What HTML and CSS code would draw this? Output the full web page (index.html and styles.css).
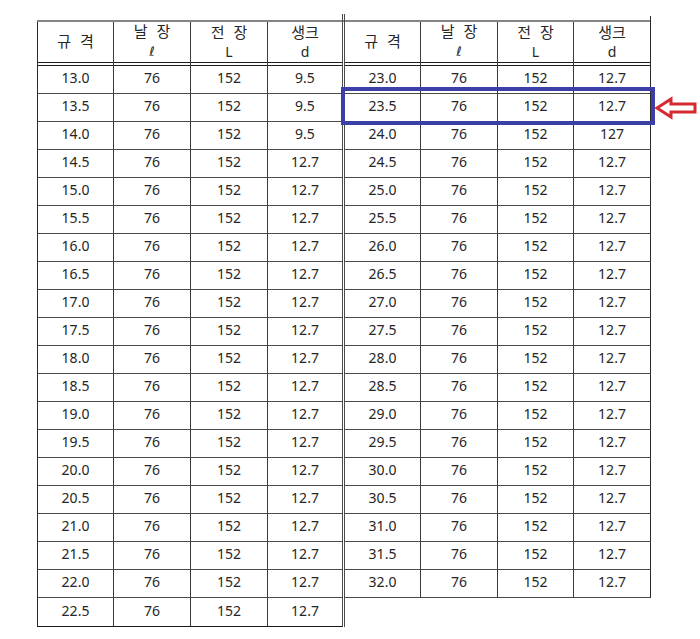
FILE: index.html
```html
<!DOCTYPE html>
<html lang="ko">
<head>
<meta charset="utf-8">
<title>규격표</title>
<link rel="stylesheet" href="styles.css">
</head>
<body>
<div class="sheet">
  <div class="half half-left">
    <table class="spec spec-left">
      <thead>
        <tr><th>규 격</th><th>날 장<br><span class="ell">ℓ</span></th><th>전 장<br><span class="sym">L</span></th><th>생크<br><span class="sym">d</span></th></tr>
      </thead>
      <tbody>
        <tr><td>13.0</td><td>76</td><td>152</td><td>9.5</td></tr>
        <tr><td>13.5</td><td>76</td><td>152</td><td>9.5</td></tr>
        <tr><td>14.0</td><td>76</td><td>152</td><td>9.5</td></tr>
        <tr><td>14.5</td><td>76</td><td>152</td><td>12.7</td></tr>
        <tr><td>15.0</td><td>76</td><td>152</td><td>12.7</td></tr>
        <tr><td>15.5</td><td>76</td><td>152</td><td>12.7</td></tr>
        <tr><td>16.0</td><td>76</td><td>152</td><td>12.7</td></tr>
        <tr><td>16.5</td><td>76</td><td>152</td><td>12.7</td></tr>
        <tr><td>17.0</td><td>76</td><td>152</td><td>12.7</td></tr>
        <tr><td>17.5</td><td>76</td><td>152</td><td>12.7</td></tr>
        <tr><td>18.0</td><td>76</td><td>152</td><td>12.7</td></tr>
        <tr><td>18.5</td><td>76</td><td>152</td><td>12.7</td></tr>
        <tr><td>19.0</td><td>76</td><td>152</td><td>12.7</td></tr>
        <tr><td>19.5</td><td>76</td><td>152</td><td>12.7</td></tr>
        <tr><td>20.0</td><td>76</td><td>152</td><td>12.7</td></tr>
        <tr><td>20.5</td><td>76</td><td>152</td><td>12.7</td></tr>
        <tr><td>21.0</td><td>76</td><td>152</td><td>12.7</td></tr>
        <tr><td>21.5</td><td>76</td><td>152</td><td>12.7</td></tr>
        <tr><td>22.0</td><td>76</td><td>152</td><td>12.7</td></tr>
        <tr class="last"><td>22.5</td><td>76</td><td>152</td><td>12.7</td></tr>
      </tbody>
    </table>
  </div>
  <div class="half half-right">
    <table class="spec spec-right">
      <thead>
        <tr><th>규 격</th><th>날 장<br><span class="ell">ℓ</span></th><th>전 장<br><span class="sym">L</span></th><th>생크<br><span class="sym">d</span></th></tr>
      </thead>
      <tbody>
        <tr><td>23.0</td><td>76</td><td>152</td><td>12.7</td></tr>
        <tr><td>23.5</td><td>76</td><td>152</td><td>12.7</td></tr>
        <tr><td>24.0</td><td>76</td><td>152</td><td>127</td></tr>
        <tr><td>24.5</td><td>76</td><td>152</td><td>12.7</td></tr>
        <tr><td>25.0</td><td>76</td><td>152</td><td>12.7</td></tr>
        <tr><td>25.5</td><td>76</td><td>152</td><td>12.7</td></tr>
        <tr><td>26.0</td><td>76</td><td>152</td><td>12.7</td></tr>
        <tr><td>26.5</td><td>76</td><td>152</td><td>12.7</td></tr>
        <tr><td>27.0</td><td>76</td><td>152</td><td>12.7</td></tr>
        <tr><td>27.5</td><td>76</td><td>152</td><td>12.7</td></tr>
        <tr><td>28.0</td><td>76</td><td>152</td><td>12.7</td></tr>
        <tr><td>28.5</td><td>76</td><td>152</td><td>12.7</td></tr>
        <tr><td>29.0</td><td>76</td><td>152</td><td>12.7</td></tr>
        <tr><td>29.5</td><td>76</td><td>152</td><td>12.7</td></tr>
        <tr><td>30.0</td><td>76</td><td>152</td><td>12.7</td></tr>
        <tr><td>30.5</td><td>76</td><td>152</td><td>12.7</td></tr>
        <tr><td>31.0</td><td>76</td><td>152</td><td>12.7</td></tr>
        <tr><td>31.5</td><td>76</td><td>152</td><td>12.7</td></tr>
        <tr><td>32.0</td><td>76</td><td>152</td><td>12.7</td></tr>
      </tbody>
    </table>
  </div>
</div>
<div class="highlight"></div>
<svg class="arrow" width="44" height="24" viewBox="0 0 44 24" aria-hidden="true">
  <polygon points="3,12 17,3 17,8 41,8 41,16 17,16 17,21" fill="#fff" stroke="#d42a30" stroke-width="3" stroke-linejoin="miter"/>
</svg>
</body>
</html>
```
FILE: styles.css
```css
html, body {
  margin: 0;
  padding: 0;
  background: #fff;
}

body {
  position: relative;
  width: 700px;
  height: 639px;
  overflow: hidden;
  font-family: "Noto Sans", "Noto Sans CJK KR", sans-serif;
  color: #262626;
}

.sheet {
  display: flex;
  align-items: stretch;
  margin: 20px 0 0 37px;
  width: 614px;
  border-top: 2px solid #858585;
}

.half {
  position: relative;
}

.half-left {
  width: 304px;
  border-left: 1px solid #2a2a2a;
  border-right: 1px solid #4a4a4a;
  border-bottom: 1px solid #1a1a1a;
  align-self: flex-start;
}

.half-right {
  width: 306px;
  margin-left: 1px;
  border-left: 1px solid #4a4a4a;
}

.half-left::before,
.half-right::before {
  content: "";
  position: absolute;
  top: -8px;
  height: 8px;
  width: 0;
}

.half-left::before {
  right: -1px;
  border-right: 1px solid #4a4a4a;
}

.half-right::before {
  left: -1px;
  border-left: 1px solid #4a4a4a;
}

.half-right::after {
  content: "";
  position: absolute;
  top: -6px;
  right: 0;
  height: 6px;
  width: 0;
  border-right: 1px solid #2a2a2a;
}

.spec {
  border-collapse: separate;
  border-spacing: 0;
  table-layout: fixed;
}

.spec-left { width: 304px; }
.spec-right { width: 306px; }

.spec th,
.spec td {
  padding: 0;
  box-sizing: border-box;
  text-align: center;
  font-size: 14px;
  font-weight: normal;
  border-right: 1px solid #3a3a3a;
}

.spec th {
  height: 44px;
  padding-bottom: 4px;
  font-size: 15px;
  line-height: 19px;
  word-spacing: 5px;
  vertical-align: middle;
  border-bottom: 1px solid #1e1e1e;
  box-shadow: inset 0 -2px 0 #fff, inset 0 -3px 0 #1e1e1e;
}

.spec th .sym {
  font-size: 14px;
}

.spec td {
  height: 28px;
  line-height: 20px;
  padding-bottom: 3px;
  vertical-align: middle;
  border-bottom: 1px solid #4a4a4a;
}

.spec-left th:nth-child(1), .spec-left td:nth-child(1) { width: 76px; }
.spec-left th:nth-child(2), .spec-left td:nth-child(2) { width: 77px; }
.spec-left th:nth-child(3), .spec-left td:nth-child(3) { width: 77px; }
.spec-left th:nth-child(4), .spec-left td:nth-child(4) { width: 74px; border-right: none; }

.spec-right th:nth-child(1), .spec-right td:nth-child(1) { width: 76px; }
.spec-right th:nth-child(2), .spec-right td:nth-child(2) { width: 77px; }
.spec-right th:nth-child(3), .spec-right td:nth-child(3) { width: 76px; }
.spec-right th:nth-child(4), .spec-right td:nth-child(4) { width: 77px; border-right: 1px solid #2a2a2a; }

.spec-left tr.last td {
  border-bottom: none;
}

.ell {
  font-family: "DejaVu Sans", sans-serif;
  font-style: italic;
  font-size: 13px;
}

.highlight {
  position: absolute;
  left: 341px;
  top: 87px;
  width: 314px;
  height: 38px;
  box-sizing: border-box;
  border: 4px solid #3d3fa8;
}

.arrow {
  position: absolute;
  left: 654px;
  top: 96px;
}
```
